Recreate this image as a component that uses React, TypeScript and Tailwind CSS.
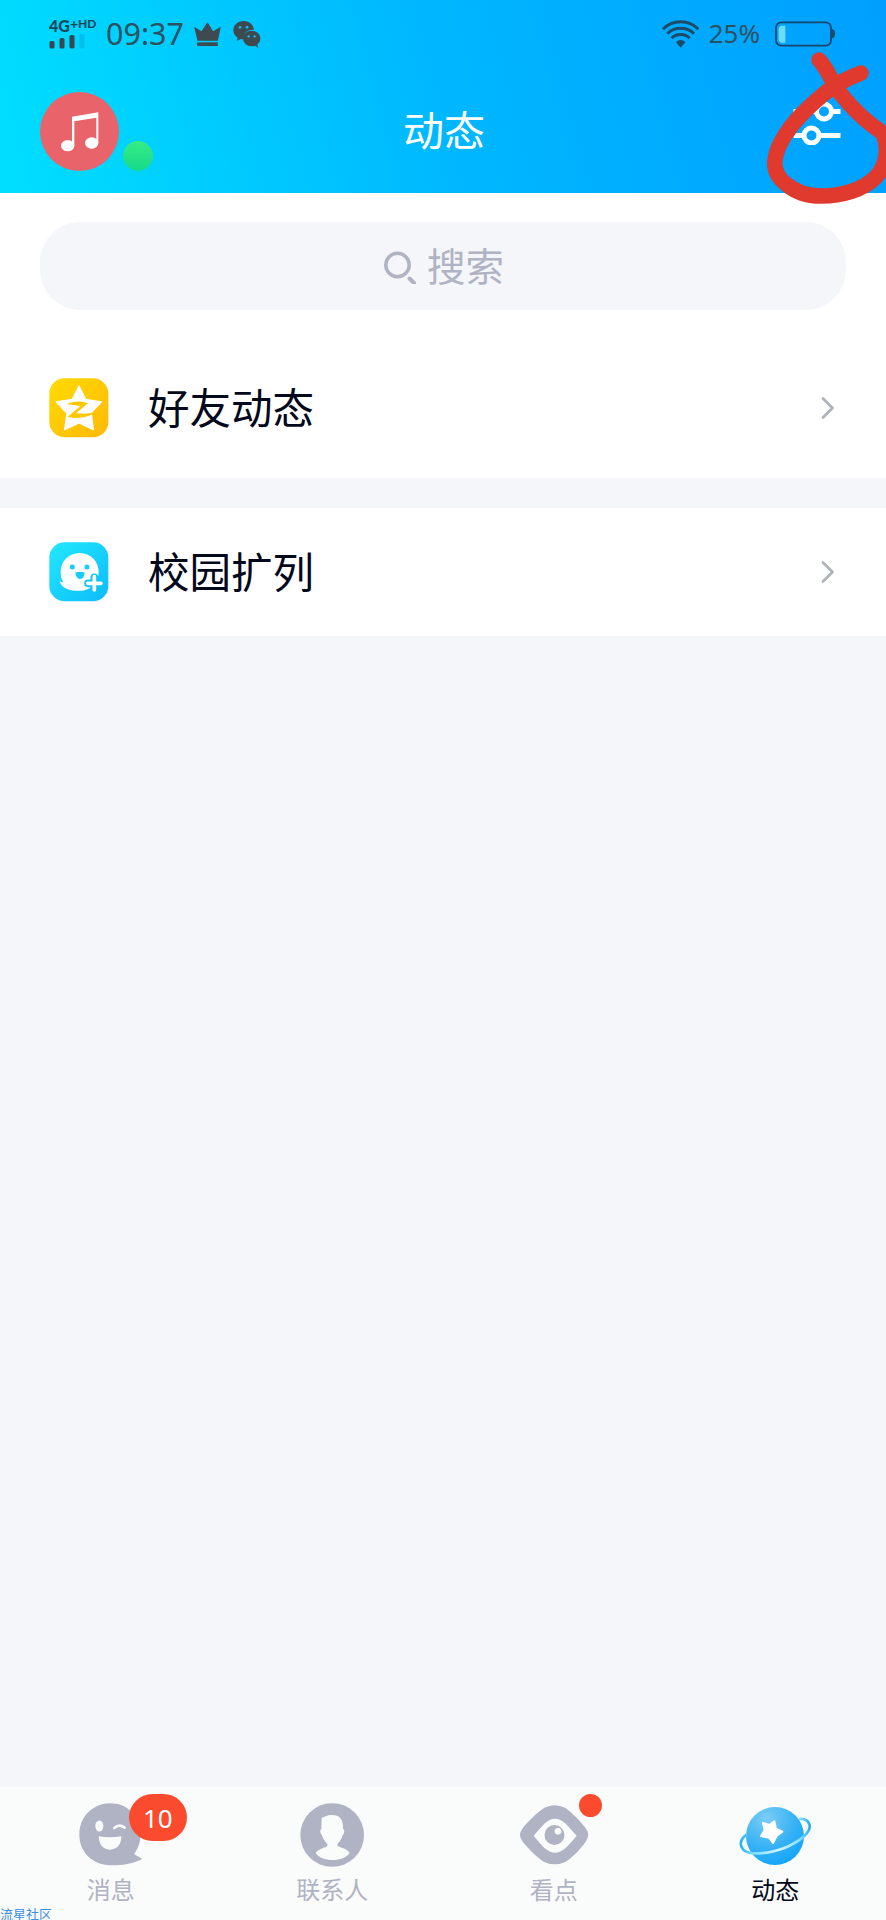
import type { ReactNode } from "react";

interface Tab {
  label: string;
  icon: ReactNode;
  badge?: ReactNode;
  active?: boolean;
}

interface Row {
  label: string;
  icon: ReactNode;
}

function SignalBars() {
  return (
    <svg className="h-[15px] w-[36px]" viewBox="0 0 36 15" fill="#37474f">
      <rect x="0.500" y="7" width="5" height="7.5" rx="1.5" />
      <rect x="10.500" y="4" width="5" height="10.5" rx="1.5" />
      <rect x="20.500" y="1" width="5" height="13.5" rx="1.5" />
      <rect x="30.500" y="0" width="5" height="14.5" rx="1.5" fill="#00a9dc" opacity="0.5" />
    </svg>
  );
}

function CrownIcon() {
  return (
    <svg className="h-6 w-[27px]" viewBox="0 0 80 72" fill="#3f4a50">
      <path d="M0 14 L22 28 L40 1 L57 28 L80 14 L71 56 H10 Z" />
      <rect x="9" y="61" width="62" height="11" />
    </svg>
  );
}

function WechatIcon() {
  return (
    <svg className="h-[27px] w-7" viewBox="0 0 84 81" fill="#3f4a50">
      <path d="M32 0 C14 0 1 12 1 28 C1 37 6 45 14 50 L11 60 L23 54 C26 55 29 55 32 55 C29 38 42 25 63 26 C60 10 48 0 32 0 Z" />
      <path d="M56 29 C41 29 30 39 30 52 C30 66 42 76 56 76 C60 76 63 75 66 74 L76 80 L73 70 C79 66 82 59 82 52 C82 39 71 29 56 29 Z" />
      <circle cx="21" cy="19" r="4" fill="#00c4ff" />
      <circle cx="42" cy="19" r="4" fill="#00c4ff" />
      <circle cx="47" cy="46" r="3.5" fill="#00c4ff" />
      <circle cx="65" cy="46" r="3.5" fill="#00c4ff" />
    </svg>
  );
}

function WifiIcon() {
  return (
    <svg className="h-7 w-[37px]" viewBox="58 60 111 84" fill="none" stroke="#1f4a66" strokeWidth="9">
      <path d="M61 88 C89 58 139 58 167 88" />
      <path d="M74 101 C95 79 133 79 154 101" />
      <path d="M87 115 C101 100 127 100 141 115" />
      <path d="M100 127 C108 118 120 118 128 127 L114 143 Z" fill="#1f4a66" stroke="none" />
    </svg>
  );
}

function BatteryIcon() {
  return (
    <svg className="h-[26px] w-[61px]" viewBox="402 64 183 78">
      <rect x="405" y="68" width="165" height="70" rx="16" fill="none" stroke="#17466b" strokeWidth="5.5" />
      <path d="M572 88 q10 2 10 14 t-10 14 Z" fill="#1f4a66" />
      <path d="M433 78 V129 H423 Q413 129 413 118 V89 Q413 78 423 78 Z" fill="#6fdcf5" />
    </svg>
  );
}

function SlidersIcon() {
  return (
    <svg className="h-[46px] w-[48px]" viewBox="0 0 48 46" fill="none" stroke="white" strokeWidth="5">
      <path d="M0.500 12.500 H24 M38.500 12.500 H47.500" />
      <circle cx="31" cy="12.500" r="7.500" />
      <path d="M0.500 36.500 H12 M26 36.500 H47.500" />
      <circle cx="18.500" cy="36.500" r="7.500" />
    </svg>
  );
}

function Scribble() {
  return (
    <svg className="absolute right-0 top-0 h-[210px] w-[126px]" viewBox="760 0 126 210" fill="none">
      <path
        d="M819 60 C826 67 829 75 835 86 C841 95 848 103 857 112 C865 120 874 127 883 133 C889 148 887 165 876 177 C863 190 842 196 821 196 C805 196 793 190 786 184 C777 177 774 168 775 160 C777 144 790 126 803 113 C813 103 822 95 833 87 C842 81 851 77 861 73"
        stroke="#e0392d"
        strokeWidth="15.500"
        strokeLinecap="round"
        strokeLinejoin="round"
      />
    </svg>
  );
}

function QzoneIcon() {
  return (
    <svg className="h-[60px] w-[60px]" viewBox="147 89 180 180">
      <defs>
        <linearGradient id="qzone" x1="0" y1="0" x2="1" y2="1">
          <stop offset="0" stopColor="#ffdb00" />
          <stop offset="1" stopColor="#ffb80b" />
        </linearGradient>
      </defs>
      <rect x="148" y="90" width="177" height="177" rx="46" fill="url(#qzone)" />
      <path
        d="M237 113 L257 153 L304 161 L273 193 L280 244 L237 224 L194 244 L201 195 L169 161 L217 153 Z"
        fill="white"
        stroke="white"
        strokeWidth="4"
        strokeLinejoin="round"
      />
      <path
        d="M200 168 C218 158 243 157 264 165 L228 195 C249 198 268 196 286 192 C263 210 228 212 203 205 L241 174 C226 170 213 169 200 168 Z"
        fill="#ffc807"
      />
    </svg>
  );
}

function CampusIcon() {
  return (
    <svg className="h-[60px] w-[60px]" viewBox="147 576 180 180">
      <defs>
        <linearGradient id="campus" x1="0" y1="0" x2="1" y2="1">
          <stop offset="0" stopColor="#22e8fb" />
          <stop offset="1" stopColor="#0cbcfb" />
        </linearGradient>
      </defs>
      <rect x="148" y="577" width="177" height="177" rx="46" fill="url(#campus)" />
      <path
        d="M239 609 C272 609 296 634 296 665 C296 698 272 722 240 722 C213 724 184 716 179 693 C184 697 188 697 190 696 C184 688 182 677 182 665 C182 634 206 609 239 609 Z"
        fill="white"
      />
      <circle cx="217" cy="651" r="7.5" fill="#14cdfb" />
      <circle cx="261" cy="651" r="7.5" fill="#14cdfb" />
      <path d="M226 668 Q240 662 254 668 Q253 686 240 687 Q228 686 226 668 Z" fill="#14cdfb" />
      <path d="M283 682 V718 M264 700 H302" stroke="#11c4fb" strokeWidth="23" strokeLinecap="round" />
      <path d="M283 680 V720 M263 700 H303" stroke="white" strokeWidth="11" strokeLinecap="round" />
    </svg>
  );
}

function MessageIcon() {
  return (
    <svg className="h-[70px] w-20" viewBox="212 90 240 210">
      <path
        d="M330 100 C382 100 421 140 421 192 C421 216 413 236 401 252 L426 267 C400 280 370 286 336 286 C278 286 237 248 237 194 C237 140 278 100 330 100 Z"
        fill="#b0b3c3"
      />
      <ellipse cx="297" cy="168" rx="12" ry="16.5" fill="#fafbfb" />
      <path d="M342 174 Q357 160 373 173" fill="none" stroke="#fafbfb" strokeWidth="8" strokeLinecap="round" />
      <path d="M295 199 Q329 205 363 199 Q362 238 329 239 Q297 238 295 199 Z" fill="#fafbfb" />
    </svg>
  );
}

function ContactsIcon() {
  return (
    <svg className="h-[70px] w-20" viewBox="157 90 240 210">
      <circle cx="277.500" cy="195" r="95.500" fill="#b0b3c3" />
      <path
        d="M246 143 C254 142 260 135 277 135 C300 135 311 147 310 176 C317 180 313 192 309 196 C306 208 298 217 293 223 C291 234 318 231 330 249 C320 263 302 270 279 270 C256 270 237 263 228 249 C240 231 267 235 263 222 C256 215 250 207 247 196 C242 190 240 181 245 177 Z"
        fill="#fafbfb"
      />
    </svg>
  );
}

function WatchIcon() {
  return (
    <svg className="h-[70px] w-20" viewBox="161 90 240 210">
      <path
        d="M252 113 Q282 98 314 113 C331 124 363 155 376 175 Q391 195 376 215 C362 236 333 265 316 275 Q283 291 250 275 C232 264 200 233 186 214 Q172 195 186 176 C200 156 234 124 252 113 Z"
        fill="#b0b3c3"
      />
      <path d="M220 197 C246 167 261 146 284 146 C307 146 323 167 349 197 C323 228 307 248 284 248 C261 248 246 228 220 197 Z" fill="#fafbfb" />
      <circle cx="282.500" cy="195" r="30" fill="#b0b3c3" />
      <circle cx="293" cy="184" r="10" fill="#fafbfb" />
    </svg>
  );
}

function PlanetIcon() {
  return (
    <svg className="h-[70px] w-20" viewBox="148 90 240 210">
      <defs>
        <radialGradient id="planet" cx="0.35" cy="0.2" r="0.9">
          <stop offset="0" stopColor="#7ccdf5" />
          <stop offset="0.550" stopColor="#37b2f5" />
          <stop offset="1" stopColor="#0fa2fb" />
        </radialGradient>
        <linearGradient id="ring" x1="0" y1="0" x2="1" y2="0">
          <stop offset="0" stopColor="#22b5f8" />
          <stop offset="0.200" stopColor="#7fe0ff" />
          <stop offset="0.550" stopColor="#d5f5ff" />
          <stop offset="0.850" stopColor="#8be2ff" />
          <stop offset="1" stopColor="#27aef6" />
        </linearGradient>
      </defs>
      <circle cx="268" cy="198" r="87" fill="url(#planet)" />
      <path
        d="M183 194 C164 207 160 226 173 239 C195 259 258 250 305 230 C347 211 378 184 371 163 C367 151 354 146 340 147"
        fill="none"
        stroke="url(#ring)"
        strokeWidth="8"
      />
      <path
        d="M232 159 L251 165 L266 154 L271 176 L290 185 L273 198 L262 219 L250 203 L226 198 L237 181 Z"
        fill="white"
        stroke="white"
        strokeWidth="6"
        strokeLinejoin="round"
      />
    </svg>
  );
}

function SearchIcon() {
  return (
    <svg className="h-9 w-9" viewBox="0 0 36 36" fill="none" stroke="#b0b3c3">
      <circle cx="15.500" cy="17" r="11.700" strokeWidth="3.500" />
      <path d="M27.500 30.500 L32 35" strokeWidth="4" strokeLinecap="round" />
    </svg>
  );
}

function Chevron() {
  return (
    <svg className="h-6 w-[14px]" viewBox="0 0 14 24" fill="none" stroke="#b0b3ba" strokeWidth="2.800">
      <path d="M2 2.500 L11.500 12 L2 21.500" strokeLinecap="round" strokeLinejoin="round" />
    </svg>
  );
}

function ListRow({ label, icon }: Row) {
  return (
    <>
      {icon}
      <span className="ml-[39px] flex-1 pb-1 text-[41.500px] leading-[60px] text-[#03081a]">{label}</span>
      <Chevron />
    </>
  );
}

const tabs: Tab[] = [
  {
    label: "消息",
    icon: <MessageIcon />,
    badge: (
      <span className="absolute -top-1.5 left-[58px] flex h-[47px] w-[58px] items-center justify-center rounded-full bg-[#fa4b2e] pt-0.5 font-['Noto_Sans'] text-[26px] text-white">
        10
      </span>
    ),
  },
  { label: "联系人", icon: <ContactsIcon /> },
  {
    label: "看点",
    icon: <WatchIcon />,
    badge: <span className="absolute -top-1.5 left-[65px] h-[23px] w-[23px] rounded-full bg-[#fa4b2e]" />,
  },
  { label: "动态", icon: <PlanetIcon />, active: true },
];

export default function App() {
  return (
    <div className="relative flex h-[1920px] w-[886px] flex-col overflow-hidden bg-[#f4f6fa] font-['Noto_Sans_CJK_SC',sans-serif]">
      <header className="h-[193px] shrink-0 bg-[linear-gradient(75deg,#00dfff_0%,#00b7ff_50%,#009fff_100%)]">
        <div className="flex h-[68px] items-center pl-[49px] pr-[50px] font-['Noto_Sans',sans-serif] text-[#2c5160]">
          <div className="flex w-[57px] flex-col">
            <div className="flex h-[14px] items-start font-['Lato',sans-serif] font-black text-[#16485c]">
              <span className="text-[16px] leading-[12px]">4G</span>
              <span className="text-[14px] leading-[7px]">+</span>
              <span className="text-[12px] leading-[8px]">HD</span>
            </div>
            <SignalBars />
          </div>
          <span className="pb-0.5 text-[30.500px] leading-none">09:37</span>
          <div className="ml-2.5 flex items-center gap-3">
            <CrownIcon />
            <WechatIcon />
          </div>
          <div className="ml-auto flex items-center">
            <WifiIcon />
            <span className="ml-2.5 mr-[15px] pb-0.5 text-[26px] leading-none">25%</span>
            <BatteryIcon />
          </div>
        </div>
        <div className="grid h-[125px] grid-cols-3 items-start pl-10 pr-[45px]">
          <div className="flex items-end pt-6">
            <div className="flex h-[79px] w-[79px] items-center justify-center rounded-full bg-[#e9636a]">
              <svg className="h-10 w-[38px]" viewBox="173 335 114 120" fill="white">
                <path d="M206 349 L285 336 V428 H279 V352 L213 363 V436 H206 Z" />
                <ellipse cx="193" cy="436" rx="20" ry="17" />
                <ellipse cx="265" cy="428" rx="20" ry="17" />
              </svg>
            </div>
            <span className="ml-1 h-[30px] w-[30px] rounded-full bg-linear-to-b from-[#35ec84] to-[#14d98a]" />
          </div>
          <h1 className="pt-[30px] pl-[7px] text-center text-[41px] leading-[60px] text-white">动态</h1>
          <div className="flex justify-end pt-[31px]">
            <SlidersIcon />
          </div>
        </div>
      </header>

      <section className="h-[285px] shrink-0 bg-white px-10 pt-[29px]">
        <div className="flex h-[88px] items-center justify-center gap-[9px] rounded-[40px] bg-[#f4f6fa] text-[#b0b3c3]">
          <SearchIcon />
          <span className="pb-1 text-[38.500px] leading-[56px]">搜索</span>
        </div>
        <div className="mt-[29px] flex h-[139px] items-center pl-[9px] pr-[11px] pb-[1px]">
          <ListRow label="好友动态" icon={<QzoneIcon />} />
        </div>
      </section>

      <section className="mt-[30px] flex h-32 shrink-0 items-center bg-white pl-[49px] pr-[51px]">
        <ListRow label="校园扩列" icon={<CampusIcon />} />
      </section>

      <nav className="mt-auto grid h-[133px] grid-cols-4 bg-[#fafbfb] pt-[13px]">
        {tabs.map((tab) => (
          <div key={tab.label} className="flex flex-col items-center">
            <div className="relative">
              {tab.icon}
              {tab.badge}
            </div>
            <span className={`mt-[7px] text-2xl leading-6 ${tab.active ? "text-[#03081a]" : "text-[#b0b3c3]"}`}>
              {tab.label}
            </span>
          </div>
        ))}
      </nav>

      <span className="absolute bottom-0 left-0 text-[13px] leading-[13px] text-[#3d8fe0]">流星社区</span>
      <Scribble />
    </div>
  );
}
